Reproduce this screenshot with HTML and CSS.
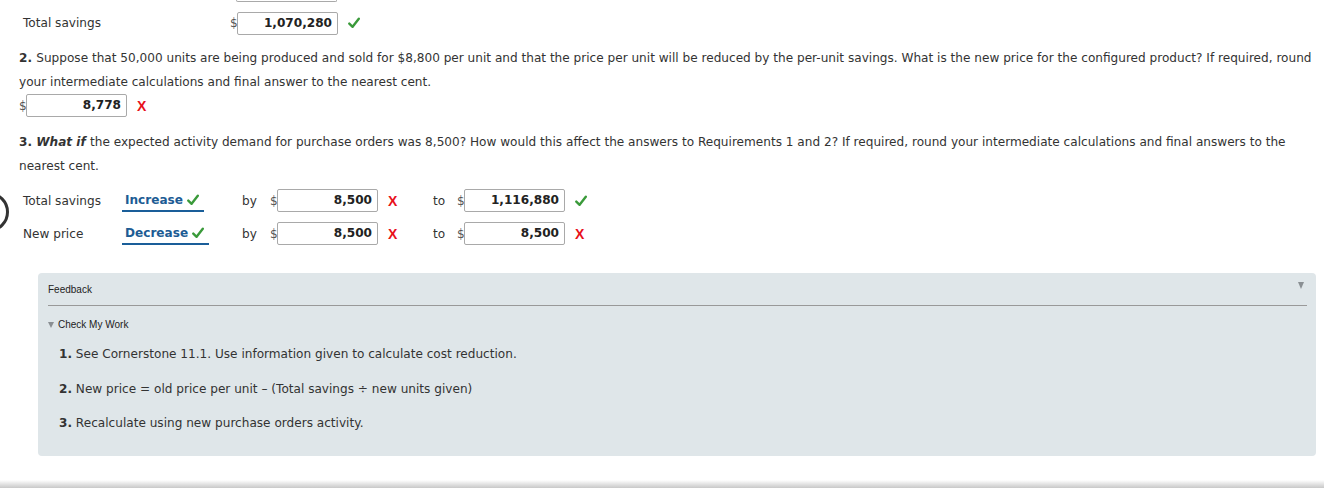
FILE: index.html
```html
<!DOCTYPE html>
<html lang="en">
<head>
  <meta charset="UTF-8">
  <meta name="viewport" content="width=device-width, initial-scale=1.0">
  <title>Check My Work</title>
  <link rel="stylesheet" href="styles.css">
</head>
<body>
  <div class="stub"></div>

  <div class="answer-row first">
    <span class="row-label wide">Total savings</span>
    <span class="dollar">$</span>
    <span class="field">1,070,280</span>
    <span class="mark ok"><svg viewBox="0 0 12 12" width="12" height="12"><path d="M1.3 6.6 L4.6 9.8 L10.8 1.8" /></svg></span>
  </div>

  <p class="question"><b>2. </b>Suppose that 50,000 units are being produced and sold for $8,800 per unit and that the price per unit will be reduced by the per-unit savings. What is the new price for the configured product? If required, round your intermediate calculations and final answer to the nearest cent.</p>

  <div class="answer-row single">
    <span class="dollar">$</span>
    <span class="field">8,778</span>
    <span class="mark bad">X</span>
  </div>

  <p class="question q3"><b>3. <i>What if </i></b>the expected activity demand for purchase orders was 8,500? How would this affect the answers to Requirements 1 and 2? If required, round your intermediate calculations and final answers to the nearest cent.</p>

  <div class="ring"></div>

  <div class="grid">
    <div class="grid-row">
      <span class="row-label">Total savings</span>
      <span class="choice-cell"><span class="choice">Increase <span class="mark ok"><svg viewBox="0 0 12 12" width="12" height="12"><path d="M1.3 6.6 L4.6 9.8 L10.8 1.8" /></svg></span></span></span>
      <span class="word by">by</span>
      <span class="dollar">$</span>
      <span class="field">8,500</span>
      <span class="mark bad">X</span>
      <span class="word to">to</span>
      <span class="dollar">$</span>
      <span class="field">1,116,880</span>
      <span class="mark ok"><svg viewBox="0 0 12 12" width="12" height="12"><path d="M1.3 6.6 L4.6 9.8 L10.8 1.8" /></svg></span>
    </div>
    <div class="grid-row">
      <span class="row-label">New price</span>
      <span class="choice-cell"><span class="choice">Decrease <span class="mark ok"><svg viewBox="0 0 12 12" width="12" height="12"><path d="M1.3 6.6 L4.6 9.8 L10.8 1.8" /></svg></span></span></span>
      <span class="word by">by</span>
      <span class="dollar">$</span>
      <span class="field">8,500</span>
      <span class="mark bad">X</span>
      <span class="word to">to</span>
      <span class="dollar">$</span>
      <span class="field">8,500</span>
      <span class="mark bad">X</span>
    </div>
  </div>

  <div class="feedback">
    <div class="feedback-head">
      <span>Feedback</span>
      <span class="arrow"></span>
    </div>
    <div class="check-title"><span class="arrow small"></span>Check My Work</div>
    <div class="hints">
      <p><b>1.</b> See Cornerstone 11.1. Use information given to calculate cost reduction.</p>
      <p><b>2.</b> New price = old price per unit &ndash; (Total savings &divide; new units given)</p>
      <p><b>3.</b> Recalculate using new purchase orders activity.</p>
    </div>
  </div>

  <div class="footer-shade"></div>
</body>
</html>
```

FILE: styles.css
```css
body {
  font-family: "DejaVu Sans", Verdana, sans-serif;
  font-size: 12.1px;
  color: #333;
  background-color: #fff;
  margin: 0;
  padding: 0 0 0 19px;
  position: relative;
  height: 488px;
  overflow: hidden;
}
.stub {
  margin-left: 217px;
  width: 99px;
  height: 1px;
  border: 1px solid #a9a9a9;
  border-top: none;
  border-radius: 0 0 2px 2px;
}
.answer-row {
  display: flex;
  align-items: center;
  height: 24px;
}
.answer-row.first {
  margin-top: 9px;
  padding-left: 4px;
}
.row-label {
  width: 101px;
  flex-shrink: 0;
}
.row-label.wide {
  width: 207px;
}
.dollar {
  color: #555;
  width: 7px;
  flex-shrink: 0;
}
.field {
  box-sizing: border-box;
  width: 101px;
  height: 23px;
  border: 1px solid #a9a9a9;
  border-radius: 2px;
  padding: 0 5px;
  text-align: right;
  font-weight: bold;
  color: #222;
  line-height: 21px;
  flex-shrink: 0;
}
.mark {
  display: inline-flex;
  align-items: center;
  margin-left: 10px;
  font-weight: bold;
}
.mark.bad {
  color: #e8101a;
  font-family: "Liberation Sans", Arial, sans-serif;
  font-size: 14px;
}
.mark svg path {
  fill: none;
  stroke: #3a9a3a;
  stroke-width: 2.4;
  stroke-linecap: round;
  stroke-linejoin: round;
}
.question {
  margin: 11px 0 0;
  line-height: 24px;
  padding-right: 6px;
}
.question.q3 {
  margin-top: 13px;
}
.answer-row.single {
  height: 23px;
}
.ring {
  position: absolute;
  left: -31px;
  top: 192px;
  width: 34px;
  height: 34px;
  border: 3px solid #333;
  border-radius: 50%;
}
.grid {
  margin-top: 6px;
  padding-left: 4px;
}
.grid-row {
  display: flex;
  align-items: center;
  height: 33px;
}
.choice-cell {
  width: 120px;
  flex-shrink: 0;
  margin-left: -2px;
}
.choice {
  display: inline-flex;
  align-items: center;
  padding: 2px 5px 3px 3px;
  border-bottom: 2px solid #1a5e99;
  color: #1d5c94;
  font-weight: bold;
  position: relative;
  top: 1px;
}
.choice .mark {
  margin-left: 4px;
}
.word.by {
  width: 28px;
}
.word.to {
  margin-left: 33px;
  width: 24px;
}
.grid-row .mark {
  width: 12px;
}
.feedback {
  margin: 23px 8px 0 19px;
  background-color: #dfe6e9;
  border-radius: 4px;
  padding: 11px 9px 23px 10px;
}
.feedback-head {
  display: flex;
  justify-content: space-between;
  align-items: flex-start;
  font-family: "Liberation Sans", Arial, sans-serif;
  font-size: 10px;
  line-height: 12px;
  color: #222;
  padding-bottom: 9px;
  border-bottom: 1px solid #999;
}
.arrow {
  display: inline-block;
  width: 0;
  height: 0;
  border-left: 3.5px solid transparent;
  border-right: 3.5px solid transparent;
  border-top: 7px solid #8a8f93;
  margin: 0 3px 0 0;
  position: relative;
  top: -2px;
}
.check-title {
  margin-top: 13px;
  font-family: "Liberation Sans", Arial, sans-serif;
  font-size: 10px;
  line-height: 12px;
  color: #222;
}
.arrow.small {
  border-left-width: 3px;
  border-right-width: 3px;
  border-top-width: 6px;
  margin-right: 4px;
  top: 0;
}
.hints {
  margin-top: 13px;
  padding-left: 11px;
}
.hints p {
  margin: 0 0 14.5px;
  line-height: 20px;
}
.hints p:last-child {
  margin-bottom: 0;
}
.footer-shade {
  position: absolute;
  left: 0;
  right: 0;
  bottom: 0;
  height: 8px;
  background: linear-gradient(#fff, #c8c8c8);
}
```
